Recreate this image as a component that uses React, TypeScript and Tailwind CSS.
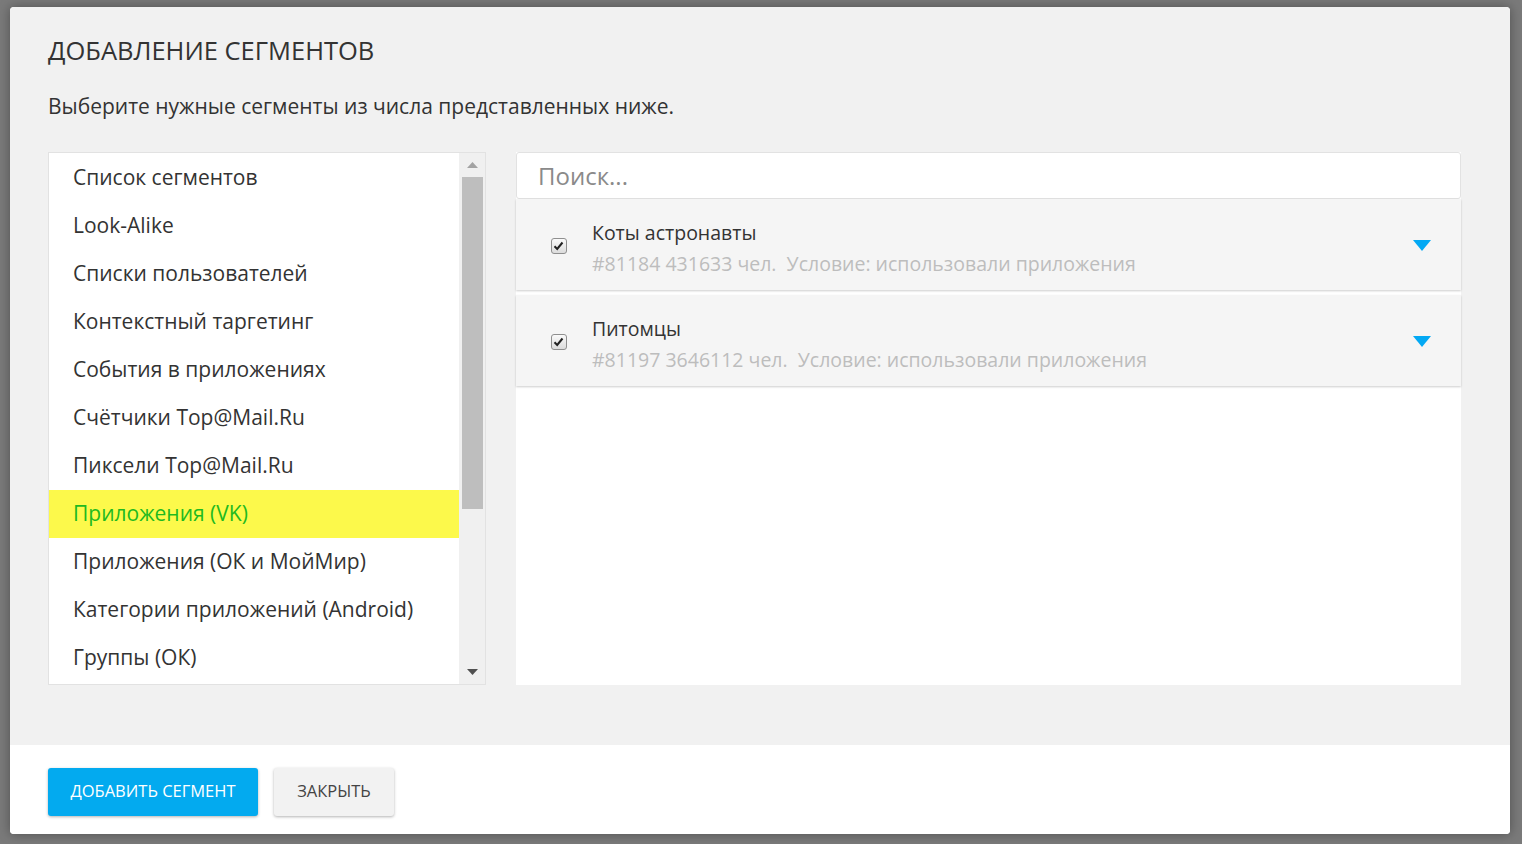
import React from "react";

const categories = [
  "Список сегментов",
  "Look-Alike",
  "Списки пользователей",
  "Контекстный таргетинг",
  "События в приложениях",
  "Счётчики Top@Mail.Ru",
  "Пиксели Top@Mail.Ru",
  "Приложения (VK)",
  "Приложения (ОК и МойМир)",
  "Категории приложений (Android)",
  "Группы (ОК)",
];

const segments = [
  { title: "Коты астронавты", id: "#81184", count: "431633" },
  { title: "Питомцы", id: "#81197", count: "3646112" },
];

function Caret() {
  return (
    <svg width="18" height="11" viewBox="0 0 18 11">
      <polygon points="0,0 18,0 9,11" fill="#03a9f4" />
    </svg>
  );
}

function Check() {
  return (
    <div className="w-[16px] h-[16px] rounded-[3px] border border-[#8f8f8f] bg-gradient-to-b from-[#fafafa] to-[#dcdcdc] flex items-center justify-center">
      <svg width="11" height="10" viewBox="0 0 11 10">
        <path d="M1.5 5.2 L4.2 8 L9.5 1.5" stroke="#222" strokeWidth="2" fill="none" />
      </svg>
    </div>
  );
}

export default function App() {
  const active = 7;
  return (
    <div
      className="w-[1522px] h-[844px] bg-[#7a7a7a] pt-[7px] pl-[10px]"
      style={{ fontFamily: '"Open Sans", "Noto Sans", sans-serif' }}
    >
      <div className="w-[1500px] h-[827px] rounded-[4px] overflow-hidden flex flex-col bg-white shadow-[0_0_12px_rgba(0,0,0,0.35)]">
        {/* body */}
        <div className="h-[738px] bg-[#f1f1f1] px-[38px] pt-[30px] flex flex-col">
          <h1 className="text-[25.5px] leading-[26px] text-[#333] font-normal">ДОБАВЛЕНИЕ СЕГМЕНТОВ</h1>
          <p className="mt-[30px] text-[21px] leading-[26px] text-[#333]">
            Выберите нужные сегменты из числа представленных ниже.
          </p>

          <div className="mt-[33px] flex gap-[30px]">
            {/* categories */}
            <div className="w-[438px] h-[533px] border border-[#e2e2e2] flex bg-white">
              <ul className="flex-1 overflow-hidden pt-[1px]">
                {categories.map((c, i) => (
                  <li
                    key={c}
                    className={
                      "h-[48px] flex items-center pl-[24px] text-[21px] " +
                      (i === active ? "bg-[#fcf94b] text-[#1fba1f]" : "text-[#333]")
                    }
                  >
                    {c}
                  </li>
                ))}
              </ul>
              <div className="w-[26px] bg-[#f0f0f0] flex flex-col items-center">
                <div className="h-[24px] flex items-center justify-center">
                  <svg width="11" height="6" viewBox="0 0 11 6">
                    <polygon points="0,6 11,6 5.5,0" fill="#a3a3a3" />
                  </svg>
                </div>
                <div className="w-[21px] h-[332px] bg-[#bebebe]" />
                <div className="flex-1" />
                <div className="h-[24px] flex items-center justify-center">
                  <svg width="11" height="6" viewBox="0 0 11 6">
                    <polygon points="0,0 11,0 5.5,6" fill="#505050" />
                  </svg>
                </div>
              </div>
            </div>

            {/* segments */}
            <div className="w-[945px] h-[533px] flex flex-col bg-white">
              <div className="h-[47px] bg-white border border-[#e2e2e2] rounded-[3px] flex items-center pl-[21px] text-[24px] text-[#8a8a8a]">
                Поиск...
              </div>
              {segments.map((s, i) => (
                <div
                  key={s.id}
                  className={
                    "h-[91px] bg-[#f5f5f5] shadow-[0_1px_2px_rgba(0,0,0,0.2)] flex items-center " +
                    (i > 0 ? "mt-[5px]" : "mt-0")
                  }
                >
                  <div className="w-[76px] flex justify-center pl-[9px] pt-[2px]">
                    <Check />
                  </div>
                  <div className="flex-1 pt-[7px]">
                    <div className="text-[19.5px] leading-[24px] text-[#333]">{s.title}</div>
                    <div className="mt-[7px] text-[19.5px] leading-[24px] text-[#bdbdbd]">
                      {s.id} {s.count} чел.&nbsp; Условие: использовали приложения
                    </div>
                  </div>
                  <div className="pr-[30px] pt-[2px]">
                    <Caret />
                  </div>
                </div>
              ))}
            </div>
          </div>
        </div>

        {/* footer */}
        <div className="flex-1 bg-white flex items-center gap-[16px] px-[38px] pt-[4px]">
          <button className="h-[48px] w-[210px] rounded-[3px] bg-[#03aaef] text-white text-[16.5px] shadow-[0_1px_3px_rgba(0,0,0,0.3)]">
            ДОБАВИТЬ СЕГМЕНТ
          </button>
          <button className="h-[48px] w-[120px] rounded-[3px] bg-[#f2f2f2] text-[#444] text-[16.5px] shadow-[0_1px_3px_rgba(0,0,0,0.3)]">
            ЗАКРЫТЬ
          </button>
        </div>
      </div>
    </div>
  );
}
